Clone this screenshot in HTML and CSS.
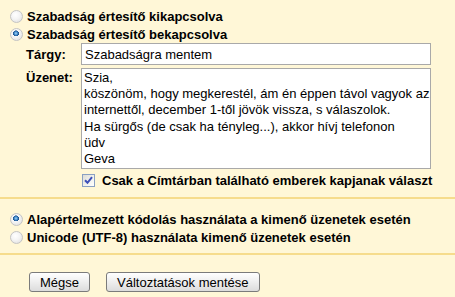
FILE: index.html
```html
<!DOCTYPE html>
<html lang="hu">
<head>
<meta charset="utf-8">
<title>Szabadság értesítő</title>
<link rel="stylesheet" href="styles.css">
</head>
<body>
<div class="page">
  <div class="sect sect-vac">
    <label class="opt"><input type="radio" name="vac" class="radio"><span>Szabadság értesítő kikapcsolva</span></label>
    <label class="opt"><input type="radio" name="vac" class="radio" checked><span>Szabadság értesítő bekapcsolva</span></label>
    <div class="form">
      <span class="lbl">Tárgy:</span>
      <input class="subj" type="text" value="Szabadságra mentem">
      <span class="lbl lbl-top">Üzenet:</span>
      <textarea class="msg">Szia,
köszönöm, hogy megkerestél, ám én éppen távol vagyok az
internettől, december 1-től jövök vissza, s válaszolok.
Ha sürgős (de csak ha tényleg...), akkor hívj telefonon
üdv
Geva</textarea>
      <span></span>
      <label class="chk"><span class="box"><svg width="9" height="9" viewBox="0 0 9 9"><path d="M1 4.2 L3.5 6.8 L8 1.2" fill="none" stroke="#3d4fb8" stroke-width="2"/></svg></span><span>Csak a Címtárban található emberek kapjanak választ</span></label>
    </div>
  </div>
  <div class="sect sect-enc">
    <label class="opt"><input type="radio" name="enc" class="radio" checked><span>Alapértelmezett kódolás használata a kimenő üzenetek esetén</span></label>
    <label class="opt"><input type="radio" name="enc" class="radio"><span>Unicode (UTF-8) használata kimenő üzenetek esetén</span></label>
  </div>
  <div class="actions">
    <button class="btn" type="button">Mégse</button>
    <button class="btn" type="button">Változtatások mentése</button>
  </div>
</div>
</body>
</html>
```

FILE: styles.css
```css
html, body {
  margin: 0;
  padding: 0;
  background: #fff7d7;
}
body {
  font-family: "Liberation Sans", Arial, sans-serif;
  font-size: 13px;
  color: #000;
  width: 455px;
  height: 297px;
  overflow: hidden;
}
.sect {
  padding-left: 10px;
  border-bottom: 2px solid #f6dc8c;
}
.sect-vac {
  padding-top: 7px;
  padding-bottom: 8px;
}
.sect-enc {
  padding-top: 11px;
  padding-bottom: 7px;
}
.opt {
  display: flex;
  align-items: center;
  height: 18px;
  font-weight: bold;
  gap: 4px;
  white-space: nowrap;
}
.radio {
  appearance: none;
  -webkit-appearance: none;
  margin: 0;
  width: 13px;
  height: 13px;
  border-radius: 50%;
  border: 1px solid #c4c4c4;
  background: radial-gradient(circle at 40% 35%, #ffffff 0%, #f4f4f4 45%, #dadada 100%);
  box-sizing: border-box;
  flex: none;
}
.radio:checked {
  background:
    radial-gradient(circle at 45% 40%, #a6d8f8 0%, #3a83c6 20%, #1c4f8a 31%, transparent 35%),
    radial-gradient(circle at 40% 35%, #ffffff 0%, #f4f4f4 45%, #dadada 100%);
}
.form {
  display: grid;
  grid-template-columns: 55px 350px;
  row-gap: 3px;
  margin-left: 16px;
  align-items: center;
}
.lbl {
  font-weight: bold;
}
.lbl-top {
  align-self: start;
  padding-top: 2px;
}
.subj {
  box-sizing: border-box;
  width: 350px;
  height: 22px;
  margin: 0;
  padding: 0 3px;
  border: 1px solid #a9a9a9;
  background: #fff;
  font-family: "Liberation Sans", Arial, sans-serif;
  font-size: 13px;
  color: #000;
}
.msg {
  box-sizing: border-box;
  width: 350px;
  height: 101px;
  margin: 0;
  padding: 1px 2px;
  border: 1px solid #a9a9a9;
  background: #fff;
  font-family: "Liberation Sans", Arial, sans-serif;
  font-size: 13px;
  line-height: 16.2px;
  color: #000;
  white-space: pre;
  overflow: hidden;
  resize: none;
}
.chk {
  display: flex;
  align-items: center;
  height: 18px;
  margin-top: -1px;
  font-weight: bold;
  gap: 7px;
  padding-left: 1px;
  white-space: nowrap;
}
.box {
  box-sizing: border-box;
  width: 13px;
  height: 13px;
  flex: none;
  border: 1px solid #8aa0c2;
  background: linear-gradient(135deg, #dcdcd6 0%, #f3f3ef 60%, #ffffff 100%);
  display: flex;
  align-items: center;
  justify-content: center;
}
.actions {
  display: flex;
  gap: 16px;
  padding: 17px 0 0 29px;
}
.btn {
  box-sizing: border-box;
  height: 20px;
  margin: 0;
  padding: 0 10px;
  border: 1px solid #7b7b7b;
  border-radius: 3px;
  background: linear-gradient(to bottom, #ffffff 0%, #f0f0f0 45%, #dcdcdc 100%);
  font-family: "Liberation Sans", Arial, sans-serif;
  font-size: 13px;
  color: #000;
}
```
